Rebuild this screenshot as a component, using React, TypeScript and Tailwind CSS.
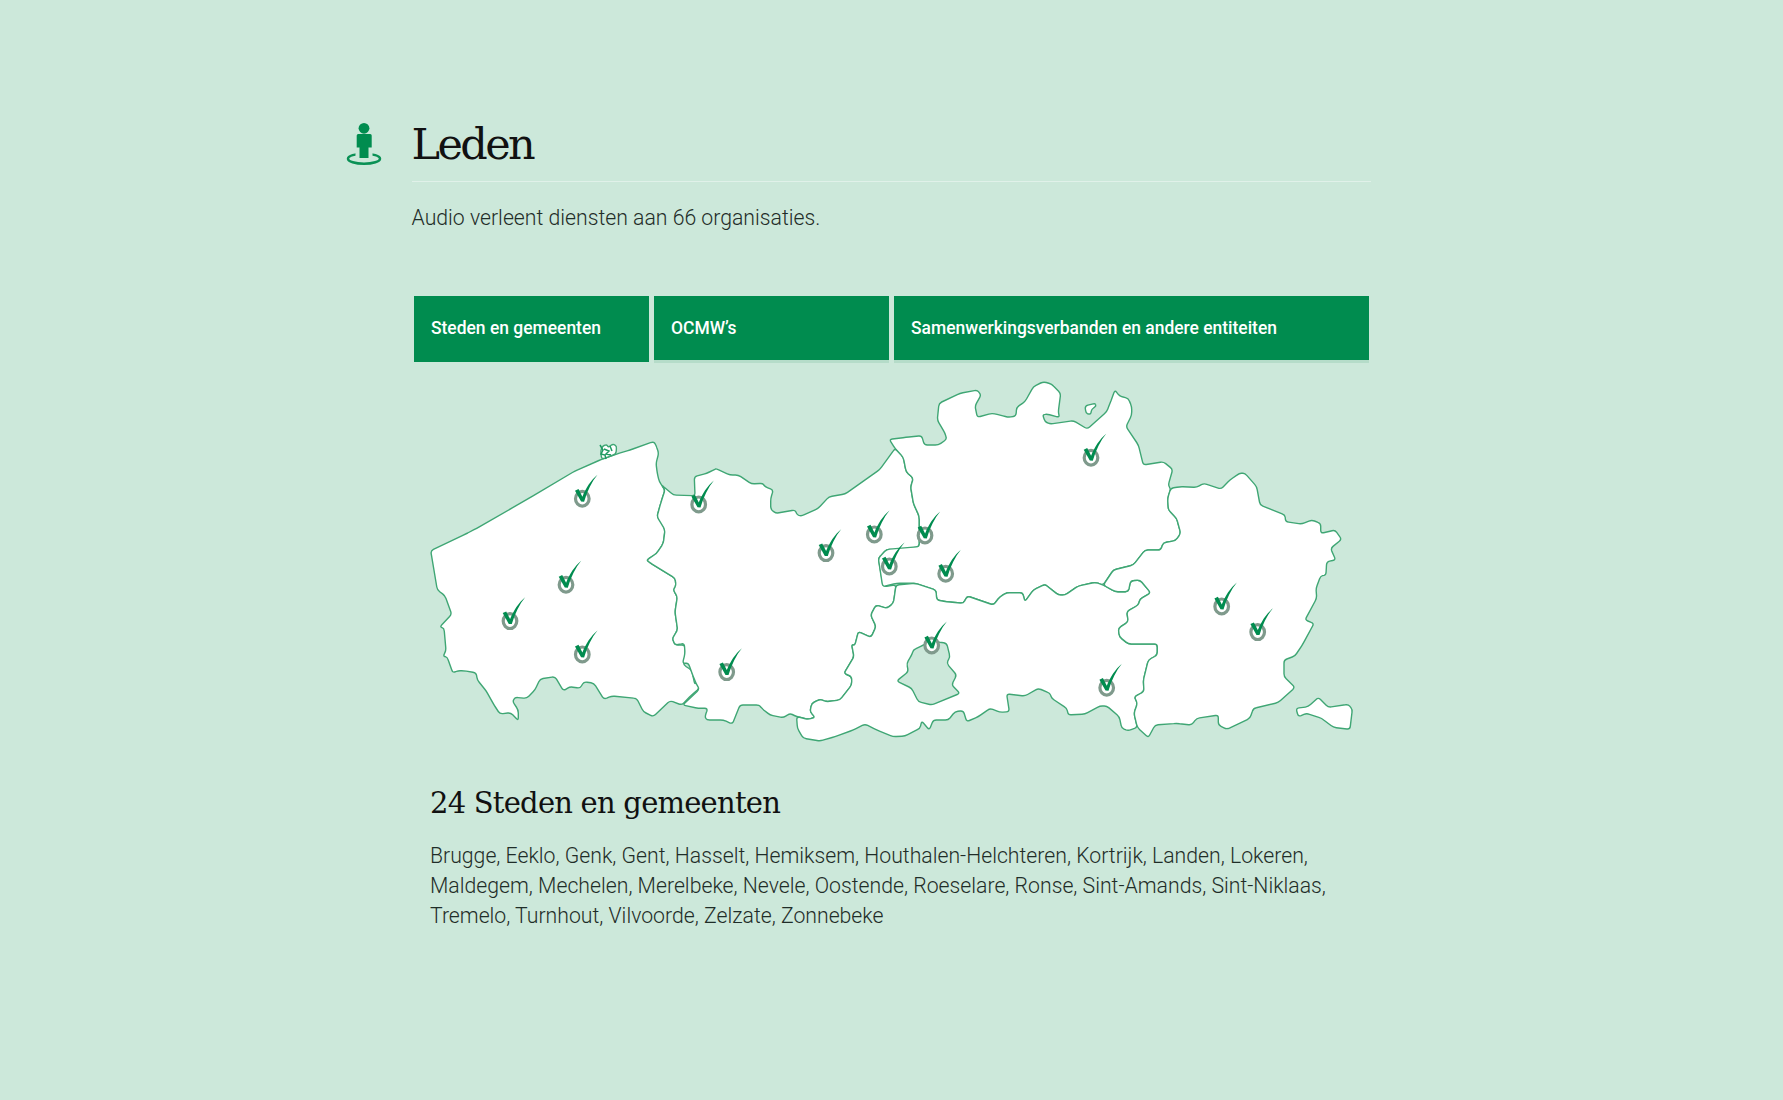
const pts = (ox: number, oy: number, s: string): number[][] =>
  s.trim().split(/\s+/).map((p) => {
    const [x, y] = p.split(",").map(Number);
    return [ox + x / 3, oy + y / 3];
  });
const f = (n: number) => n.toFixed(1);
const toD = (a: number[][]) => {
  const n = a.length;
  const toward = (p: number[], q: number[]) => {
    const len = Math.hypot(q[0] - p[0], q[1] - p[1]) || 1;
    const dist = Math.min(len * 0.35, 3);
    return [p[0] + ((q[0] - p[0]) * dist) / len, p[1] + ((q[1] - p[1]) * dist) / len];
  };
  let d = "";
  for (let i = 0; i < n; i++) {
    const prev = a[(i - 1 + n) % n];
    const cur = a[i];
    const next = a[(i + 1) % n];
    const s = toward(cur, prev);
    const e = toward(cur, next);
    d += (i === 0 ? "M" : "L") + f(s[0]) + " " + f(s[1]) + "Q" + f(cur[0]) + " " + f(cur[1]) + " " + f(e[0]) + " " + f(e[1]);
  }
  return d + "Z";
};

const Z2 = (s: string) => pts(420, 430, s);
const Z3 = (s: string) => pts(680, 370, s);
const Z4 = (s: string) => pts(1000, 370, s);

const west = Z2(
  "32,362 135,313 170,295 330,203 465,123 545,88 590,72 630,60 700,35 708,45 716,70 708,100 712,130 718,155 735,180 725,210 718,235 711,260 725,275 735,300 730,340 710,370 680,390 690,398 765,445 768,465 760,480 772,500 765,545 773,600 757,625 765,645 795,645 795,680 790,705 815,720 825,765 838,740 838,775 815,795 785,825 750,812 700,860 670,845 650,805 575,798 552,808 522,760 492,755 480,775 450,770 430,782 405,740 360,747 345,780 320,805 285,802 278,815 295,840 295,872 272,848 240,852 222,825 200,785 172,750 168,728 130,722 115,722 98,728 82,682 70,678 78,660 72,595 60,590 95,553 75,497 52,480"
);
const east = [
  ...Z2("725,165 760,195 825,197 823,140 860,130 885,118"),
  ...Z3(
    "108,296 150,315 175,315 215,342 248,340 255,350 280,360 272,385 272,418 288,430 345,420 352,435 365,438 415,415 447,380 495,372 600,298 645,235 670,262 678,305 700,325 692,350 700,400 718,440 718,530 660,540 620,538 595,565 610,650 648,645 640,700 620,715 588,705 572,735 588,770 573,802 535,785 525,825 515,825 522,860 492,910 515,920 515,945 480,990 440,995 420,988 395,1000 390,1025 405,1042 385,1048 350,1040 330,1030 310,1043 270,1035 245,1015 238,1005 180,1005 157,1062 130,1050 80,1050 75,1040 83,1015 55,1015 8,1005 58,958 48,940 40,920 25,880 8,880 15,850 13,820"
  ),
  ...Z2("765,645 757,625 773,600 765,545 772,500 760,480 768,465 765,445 690,398 680,390 710,370 730,340 735,300 711,260 718,235 725,210 735,180"),
];
const antwerp = [
  ...Z3(
    "645,235 628,208 678,202 725,197 733,225 775,225 800,208 795,190 772,150 777,100 840,70 892,60 903,75 885,108 892,142 935,130"
  ),
  ...Z4(
    "0,135 25,142 48,138 50,112 75,95 100,50 130,35 155,42 182,70 175,125 178,142 140,132 128,135 135,155 150,162 220,152 262,177 320,125 330,100 345,60 358,78 385,85 395,110 395,135 378,170 415,225 430,285 490,275 518,298 505,345 512,358 503,385 505,420 530,445 542,490 527,512 490,518 482,540 435,540 400,585 340,600 310,645 285,637 235,648 195,675 175,675 135,643 100,660 75,695 68,668 20,668 0,680"
  ),
  ...Z3("940,705 862,678 850,700 800,695 770,690 768,660 705,640 650,640 608,650 595,565 620,538 718,530 718,440 700,400 692,350 700,325 678,305 670,262"),
];
const brabant = [
  ...Z3("648,645 705,640 768,660 770,690 800,695 850,700 862,678 940,705"),
  ...Z4(
    "0,680 20,668 68,668 75,695 100,660 135,643 175,675 195,675 235,648 285,637 310,645 345,665 385,665 392,632 420,630 452,668 420,688 415,705 380,725 385,755 355,775 358,800 385,822 472,822 472,855 445,870 430,930 432,965 403,980 412,1000 402,1030 412,1072 385,1082 365,1075 358,1040 320,1008 300,1008 255,1032 205,1035 200,1015 155,985 150,970 115,955 75,978 20,972 28,1025 0,1027"
  ),
  ...Z3(
    "930,1015 895,1040 860,1055 850,1022 825,1025 805,1050 760,1050 748,1080 725,1053 720,1075 675,1098 640,1100 590,1080 555,1062 520,1080 465,1100 420,1113 370,1105 352,1075 350,1040 385,1048 405,1042 390,1025 395,1000 420,988 440,995 480,990 515,945 515,920 492,910 522,860 515,825 525,825 535,785 573,802 588,770 572,735 588,705 620,715 640,700"
  ),
];
const brussels = Z3(
  "730,825 700,840 695,855 680,880 685,905 650,933 695,955 715,995 755,1005 840,970 815,945 830,915 800,880 810,860 800,820 770,815"
);
const limburg = Z4(
  "512,355 540,350 590,352 612,340 663,357 690,330 718,310 735,310 770,350 780,405 855,435 857,455 905,462 935,450 962,460 962,490 1005,480 1025,508 992,535 1007,570 980,575 978,615 962,618 948,655 950,685 915,750 942,760 910,820 885,858 852,870 852,920 885,952 835,998 760,1015 750,1045 680,1078 655,1065 655,1035 590,1045 575,1065 530,1060 465,1065 445,1103 412,1072 402,1030 412,1000 403,980 432,965 430,930 445,870 472,855 472,822 385,822 358,800 355,775 385,755 380,725 415,705 420,688 452,668 420,630 392,632 385,665 345,665 310,645 340,600 400,585 435,540 482,540 490,518 527,512 542,490 530,445 505,420 503,385"
);
const voeren = Z4(
  "888,1015 925,1010 955,982 985,1012 1045,1003 1057,1018 1050,1078 1000,1072 965,1045 920,1030 895,1040"
);
const baarle = Z4("255,108 285,100 288,108 275,118 272,133 258,130");
const islet = Z2("545,88 542,62 548,48 560,44 565,52 578,42 590,48 588,72");

const shapes = [west, east, antwerp, brabant, limburg, voeren, baarle, islet];

const pins = [
  [582.3, 498.3],
  [566, 584.3],
  [510, 620.7],
  [582.3, 654],
  [698.7, 504],
  [726.7, 671.7],
  [826, 552.7],
  [874.3, 534],
  [925, 535],
  [889.3, 566],
  [945.7, 573.3],
  [931.7, 645],
  [1091, 457.3],
  [1221.7, 606],
  [1257.7, 631.7],
  [1106.7, 687.3],
];

function PersonIcon() {
  return (
    <svg width="36" height="46" viewBox="0 0 36 46" className="block">
      <ellipse cx="18" cy="38.7" rx="16" ry="5" fill="none" stroke="#0a9155" strokeWidth="2.5" />
      <rect x="9.5" y="32" width="17" height="4.5" fill="#cce8da" />
      <circle cx="18" cy="8.3" r="5.4" fill="#008c4f" />
      <path d="M10.7 15.5Q10.7 14 12.2 14H24.2Q25.7 14 25.7 15.5V27.5H22.5V38H13.5V27.5H10.7Z" fill="#008c4f" />
    </svg>
  );
}

function FlandersMap() {
  return (
    <svg width="956" height="375" viewBox="414 375 956 375" className="block">
      {shapes.map((s, i) => (
        <path key={i} d={toD(s)} fill="#ffffff" stroke="#3fa674" strokeWidth="1.4" strokeLinejoin="round" />
      ))}
      <path d={toD(brussels)} fill="#cce8da" stroke="#3fa674" strokeWidth="1.4" strokeLinejoin="round" />
      <g fill="none" stroke="#1f9a62" strokeWidth="1.5">
        <path d="M604 449l5 2-3 3 5 1M600 445l3 5-2 4 4 1 1 4M610 446l2 5" />
      </g>
      {pins.map(([x, y], i) => (
        <g key={i} transform={`translate(${x} ${y})`}>
          <ellipse rx="6.8" ry="7.4" cy="0.4" fill="#ffffff" stroke="#7f9a8c" strokeWidth="3.2" />
          <path d="M-7.3 -7.6L-3.8 -9.2L0.1 -1.6C3.5 -10 8.5 -18 15.2 -23.5C9.5 -16.5 5 -7.5 1.8 3.4L-1.2 3.2Z" fill="#008c4f" />
        </g>
      ))}
    </svg>
  );
}

const tabText = "text-[17.45px] font-[480] text-white";

export default function App() {
  return (
    <div className="min-h-[1100px] bg-[#cce8da] font-['Roboto',sans-serif]">
      <div className="mx-auto w-[960px] pt-[112px]">
        <div className="flex items-center border-b border-[#e0f1e9] h-[70px] mr-[1px]">
          <div className="-ml-[65.5px] w-[65.5px] shrink-0 pb-[8px]">
            <PersonIcon />
          </div>
          <h1 className="text-[43px] leading-none tracking-[-2.6px] pb-[4px] text-[#111111] font-['DejaVu_Serif',serif]">Leden</h1>
        </div>
        <p className="mt-[21px] text-[21.22px] leading-[30px] font-light text-[#1f2d28]">
          Audio verleent diensten aan 66 organisaties.
        </p>
        <div className="mt-[63px] ml-[2.5px] flex items-start gap-[5px] w-[955px]">
          <div className={`flex h-[66px] w-[235px] items-center pl-[17px] pb-[2px] bg-[#008c4f] ${tabText}`}>
            Steden en gemeenten
          </div>
          <div className={`flex h-[64px] w-[235px] items-center pl-[17px] bg-[#008c4f] shadow-[0_3px_0_#b5dcc9] ${tabText}`}>
            OCMW’s
          </div>
          <div className={`flex h-[64px] flex-1 items-center pl-[17px] bg-[#008c4f] shadow-[0_3px_0_#b5dcc9] ${tabText}`}>
            Samenwerkingsverbanden en andere entiteiten
          </div>
        </div>
        <div className="mt-[13px] ml-[2.5px]">
          <FlandersMap />
        </div>
        <div className="pl-[18.5px] pr-[20px] mt-[33px]">
          <h2 className="text-[29px] leading-[40px] tracking-[-0.78px] text-[#111111] font-['DejaVu_Serif',serif]">24 Steden en gemeenten</h2>
          <p className="mt-[18px] text-[21.22px] leading-[30px] font-light text-[#1f2d28]">
            Brugge, Eeklo, Genk, Gent, Hasselt, Hemiksem, Houthalen-Helchteren, Kortrijk, Landen, Lokeren, Maldegem, Mechelen, Merelbeke, Nevele, Oostende, Roeselare, Ronse, Sint-Amands, Sint-Niklaas, Tremelo, Turnhout, Vilvoorde, Zelzate, Zonnebeke
          </p>
        </div>
      </div>
    </div>
  );
}
